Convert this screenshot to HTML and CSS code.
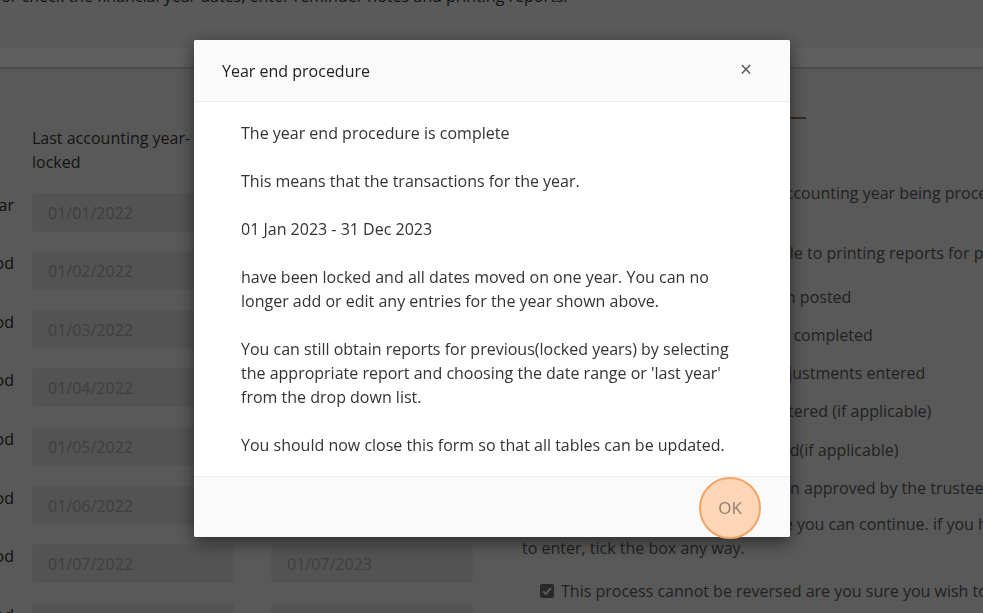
FILE: index.html
```html
<!DOCTYPE html>
<html lang="en">
<head>
<meta charset="utf-8">
<title>Year end procedure</title>
<link rel="stylesheet" href="styles.css">
</head>
<body>
<div class="page">
  <div class="intro">Use this form to set or check the financial year dates, enter reminder notes and printing reports.</div>
  <div class="band"></div>
  <div class="main">
    <div class="dates">
      <div class="lab"></div>
      <div class="head">Last accounting year-locked</div>
      <div class="head">Current accounting year</div>

      <div class="lab"><span>Start of year</span></div>
      <div class="field">01/01/2022</div>
      <div class="field">01/01/2023</div>

      <div class="lab"><span>2nd period</span></div>
      <div class="field">01/02/2022</div>
      <div class="field">01/02/2023</div>

      <div class="lab"><span>3rd period</span></div>
      <div class="field">01/03/2022</div>
      <div class="field">01/03/2023</div>

      <div class="lab"><span>4th period</span></div>
      <div class="field">01/04/2022</div>
      <div class="field">01/04/2023</div>

      <div class="lab"><span>5th period</span></div>
      <div class="field">01/05/2022</div>
      <div class="field">01/05/2023</div>

      <div class="lab"><span>6th period</span></div>
      <div class="field">01/06/2022</div>
      <div class="field">01/06/2023</div>

      <div class="lab"><span>7th period</span></div>
      <div class="field">01/07/2022</div>
      <div class="field">01/07/2023</div>

      <div class="lab"><span>8th period</span></div>
      <div class="field">01/08/2022</div>
      <div class="field">01/08/2023</div>
    </div>
    <div class="side">
      <div class="tabs"><div class="tab active">Year end checklist</div><div class="tab-rest"></div></div>
      <p class="p1">Please confirm that this is the last accounting year being processed</p>
      <p class="p2">Check off each of the steps applicable to printing reports for previous years</p>
      <ul class="steps">
        <li>All receipts and payments have been posted</li>
        <li>Bank reconciliations have now been completed</li>
        <li>Any year end journals, and other adjustments entered</li>
        <li>Depreciation &amp; prepayments are entered (if applicable)</li>
        <li>Gift Aid claim(s) have been submitted(if applicable)</li>
        <li>Your year end accounts have all been approved by the trustees</li>
        <li>All of these must now be met before you can continue. if you have nothing<br>to enter, tick the box any way.</li>
      </ul>
      <label class="confirm">
        <span class="box"><svg width="14" height="14" viewBox="0 0 14 14"><rect x="0" y="0" width="14" height="14" rx="2" fill="#707070"/><path d="M3 7.2 L5.8 10 L11 4" fill="none" stroke="#f4f4f4" stroke-width="2"/></svg></span>
        <span>This process cannot be reversed are you sure you wish to continue?</span>
      </label>
    </div>
  </div>
</div>

<div class="backdrop"></div>

<div class="modal">
  <div class="modal-head">
    <div class="modal-title">Year end procedure</div>
    <div class="close">×</div>
  </div>
  <div class="modal-body">
    <p>The year end procedure is complete</p>
    <p>This means that the transactions for the year.</p>
    <p>01 Jan 2023 - 31 Dec 2023</p>
    <p>have been locked and all dates moved on one year. You can no longer add or edit any entries for the year shown above.</p>
    <p>You can still obtain reports for previous(locked years) by selecting the appropriate report and choosing the date range or 'last year' from the drop down list.</p>
    <p>You should now close this form so that all tables can be updated.</p>
  </div>
  <div class="modal-foot">
    <div class="ok">OK</div>
  </div>
</div>
</body>
</html>
```

FILE: styles.css
```css
html, body {
  margin: 0;
  padding: 0;
  overflow: hidden;
  height: 100%;
}
body {
  font-family: "Open Sans", "Liberation Sans", sans-serif;
  font-size: 16px;
  line-height: 24px;
  color: #444;
  background: #f1f1f1;
}
.page {
  margin-top: -16px;
  width: 1200px;
}
.intro {
  background: #f4f4f4;
  color: #333;
  padding: 0 0 40px 0;
  height: 24px;
  white-space: nowrap;
  margin-left: -149px;
}
.band {
  height: 19px;
  background: #ffffff;
  border-bottom: 2px solid #d2d2d2;
}
.main {
  display: flex;
  align-items: flex-start;
}
.dates {
  display: grid;
  grid-template-columns: 32px 239px 202px;
  row-gap: 19.6px;
  padding-top: 55px;
}
.lab {
  display: flex;
  justify-content: flex-end;
  padding-right: 18px;
  white-space: nowrap;
  color: #2e2e2e;
  overflow: visible;
}
.head {
  width: 202px;
  color: #3a3a3a;
  height: 47px;
  padding-top: 2px;
}
.field {
  width: 202px;
  height: 39px;
  box-sizing: border-box;
  background: #e0e0e0;
  border: 1px solid #e6e6e6;
  border-radius: 2px;
  padding-left: 15px;
  line-height: 38px;
  color: #aaaaaa;
}
.side {
  margin-left: 49px;
  width: 620px;
  color: #5a5a5a;
}
.tabs {
  height: 50px;
  display: flex;
}
.tab {
  width: 284px;
  padding-top: 12px;
  box-sizing: border-box;
  text-align: right;
  color: #f1f1f1;
}
.tab.active {
  border-bottom: 2px solid #8a7463;
}
.tab-rest {
  width: 1px;
  margin-top: 50px;
  height: 45px;
  background: #e8e8e8;
}
.side p {
  margin: 0;
}
.p1 {
  margin-top: 62px !important;
}
.p2 {
  margin-top: 36px !important;
}
.steps {
  list-style: none;
  margin: 20px 0 0 0;
  padding: 0;
}
.steps li {
  margin-bottom: 14px;
}
.steps li:nth-child(4) {
  margin-bottom: 15px;
}
.steps li:nth-child(6) {
  margin-bottom: 12px;
}
.confirm {
  display: flex;
  align-items: center;
  gap: 7px;
  margin-top: 19px;
  padding-left: 18px;
  white-space: nowrap;
}
.box {
  display: flex;
  width: 14px;
  height: 14px;
}

.backdrop {
  position: fixed;
  inset: 0;
  background: rgba(0, 0, 0, 0.63);
}
.modal {
  position: fixed;
  left: 194px;
  top: 40px;
  width: 596px;
  background: #ffffff;
  border-radius: 2px;
  box-shadow: 0 5px 18px rgba(0, 0, 0, 0.55);
  color: #333;
}
.modal-head {
  height: 62px;
  box-sizing: border-box;
  display: flex;
  align-items: center;
  justify-content: space-between;
  padding: 0 38px 0 28px;
  background: #fafafa;
  border-bottom: 1px solid #ececec;
  border-radius: 2px 2px 0 0;
}
.modal-title {
  font-size: 16px;
  color: #222;
}
.close {
  font-size: 21px;
  color: #555;
  line-height: 20px;
  margin-top: -3px;
}
.modal-body {
  padding: 19px 47px 19px 47px;
}
.modal-body p {
  margin: 0 0 24px 0;
}
.modal-body p:last-child {
  margin-bottom: 0;
}
.modal-foot {
  height: 61px;
  box-sizing: border-box;
  border-top: 1px solid #ececec;
  background: #fafafa;
  display: flex;
  justify-content: flex-end;
  align-items: center;
  padding-right: 29px;
  border-radius: 0 0 2px 2px;
}
.ok {
  width: 62px;
  height: 62px;
  box-sizing: border-box;
  border-radius: 50%;
  border: 2px solid #f2a467;
  background: #fcd6b7;
  color: #8d8072;
  font-size: 17px;
  display: flex;
  align-items: center;
  justify-content: center;
  margin-top: 2px;
  flex-shrink: 0;
}
```
